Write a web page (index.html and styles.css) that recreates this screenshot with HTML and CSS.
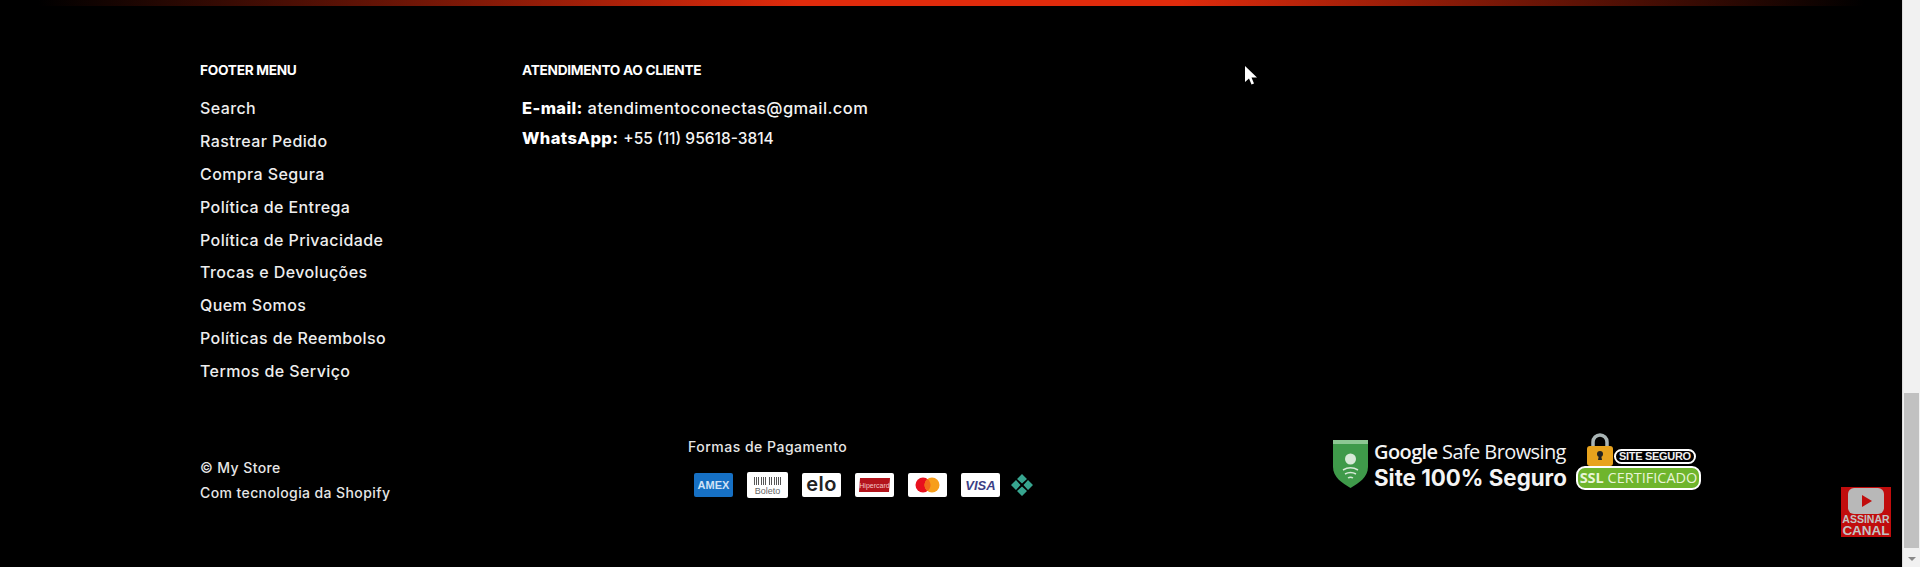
FILE: index.html
```html
<!DOCTYPE html>
<html>
<head>
    <title>My Store</title>
    <link rel="stylesheet" href="styles.css">
</head>
<body>
    <div class="page">
        <footer class="footer">
            <div class="top-line"></div>

            <div class="footer-blocks">
                <div class="menu-block">
                    <h4>FOOTER MENU</h4>
                    <ul class="menu">
                        <li><a href="#">Search</a></li>
                        <li><a href="#">Rastrear Pedido</a></li>
                        <li><a href="#">Compra Segura</a></li>
                        <li><a href="#">Política de Entrega</a></li>
                        <li><a href="#">Política de Privacidade</a></li>
                        <li><a href="#">Trocas e Devoluções</a></li>
                        <li><a href="#">Quem Somos</a></li>
                        <li><a href="#">Políticas de Reembolso</a></li>
                        <li><a href="#">Termos de Serviço</a></li>
                    </ul>
                </div>
                <div class="contact-block">
                    <h4>ATENDIMENTO AO CLIENTE</h4>
                    <p><strong>E-mail:</strong> atendimentoconectas@gmail.com</p>
                    <p><strong>WhatsApp:</strong> <span class="phone">+55 (11) 95618-3814</span></p>
                </div>
            </div>

            <div class="footer-bottom">
                <div class="copyright">
                    <div>© My Store</div>
                    <div>Com tecnologia da Shopify</div>
                </div>

                <div class="payments">
                    <div class="payments-title">Formas de Pagamento</div>
                    <div class="payment-icons">
                        <svg class="pay" width="39" height="24" viewBox="0 0 39 24">
                            <rect width="39" height="24" rx="2" fill="#1670c4"/>
                            <text x="19.5" y="16" text-anchor="middle" class="amex-text">AMEX</text>
                        </svg>
                        <svg class="pay pay-boleto" width="41" height="26" viewBox="0 0 41 26">
                            <rect width="41" height="26" rx="2" fill="#fff"/>
                            <path d="M7.500 5v8M9.500 5v8M11.500 5v8M14.500 5v8M16.500 5v8M18.500 5v8M22.500 5v8M24.500 5v8M27.500 5v8M29.500 5v8M31.500 5v8M33.500 5v8" stroke="#555" stroke-width="1"/>
                            <text x="20.5" y="22" text-anchor="middle" class="boleto-text">Boleto</text>
                        </svg>
                        <svg class="pay" width="39" height="24" viewBox="0 0 39 24">
                            <rect width="39" height="24" rx="2" fill="#fff"/>
                            <text x="19.5" y="18" text-anchor="middle" class="elo-text">elo</text>
                        </svg>
                        <svg class="pay" width="39" height="24" viewBox="0 0 39 24">
                            <rect width="39" height="24" rx="2" fill="#fff"/>
                            <path d="M5 5h30l-1 14H4z" fill="#b3131b"/>
                            <text x="19.5" y="14.5" text-anchor="middle" class="hiper-text">Hipercard</text>
                        </svg>
                        <svg class="pay" width="39" height="24" viewBox="0 0 39 24">
                            <rect width="39" height="24" rx="2" fill="#fff"/>
                            <circle cx="15" cy="12" r="7.5" fill="#e8101e"/>
                            <circle cx="24" cy="12" r="7.5" fill="#f79e1b"/>
                            <path d="M19.5 6a7.5 7.5 0 0 1 0 12a7.5 7.5 0 0 1 0-12z" fill="#f26a1b"/>
                        </svg>
                        <svg class="pay" width="39" height="24" viewBox="0 0 39 24">
                            <rect width="39" height="24" rx="2" fill="#fff"/>
                            <text x="19.5" y="17" text-anchor="middle" class="visa-text">VISA</text>
                        </svg>
                        <svg class="pay pay-pix" width="22" height="22" viewBox="0 0 22 22">
                            <path d="M11 0l5 5-5 4.500L6 5zM11 22l-5-5 5-4.500 5 4.500zM0 11l5-5 4.500 5L5 16zM22 11l-5 5-4.500-5L17 6z" fill="#37a58f"/>
                        </svg>
                    </div>
                </div>

                <div class="trust">
                    <svg class="shield" width="37" height="50" viewBox="0 0 37 50">
                        <path d="M1 1h35v27c0 10-9 16-17.500 21C10 44 1 38 1 28z" fill="#3f9a4a"/>
                        <path d="M1 1h35v4H1z" fill="#8dc893"/>
                        <circle cx="18.500" cy="20" r="5.500" fill="#d7e9d8"/>
                        <path d="M11 31c5-3 10-3 15 0M13 35c3.500-2 7.500-2 11 0M16 39c1.500-1 3.500-1 5 0" stroke="#d7e9d8" stroke-width="1.500" fill="none"/>
                    </svg>
                    <div class="safe-text">
                        <div class="safe-name"><b>Google</b> Safe Browsing</div>
                        <div class="safe-site">Site 100% Seguro</div>
                    </div>
                    <div class="ssl">
                        <div class="ssl-top">
                            <svg width="28" height="33" viewBox="0 0 28 33">
                                <path d="M7 15V9a7 7 0 0 1 14 0v6" stroke="#a9b4b4" stroke-width="3.500" fill="none"/>
                                <rect x="1" y="13" width="26" height="20" rx="3" fill="#e8a31d"/>
                                <circle cx="14" cy="21" r="3" fill="#222"/>
                                <path d="M13 22h2l1 5h-4z" fill="#222"/>
                            </svg>
                            <span class="ssl-site">SITE SEGURO</span>
                        </div>
                        <div class="ssl-label"><b>SSL</b> CERTIFICADO</div>
                    </div>
                </div>
            </div>

            <div class="yt-badge">
                <svg width="36" height="26" viewBox="0 0 36 26">
                    <rect width="36" height="26" rx="6" fill="#b8b8b8"/>
                    <path d="M14 7l10 6-10 6z" fill="#c10d0d"/>
                </svg>
                <div class="yt-label">ASSINAR</div>
                <div class="yt-label yt-big">CANAL</div>
            </div>

            <svg class="cursor" width="14" height="20" viewBox="0 0 14 20">
                <path d="M1 0v16l4-3.500 2.500 6 2.500-1-2.500-6H13z" fill="#fff"/>
            </svg>
        </footer>

        <div class="scrollbar">
            <div class="scroll-track">
                <div class="scroll-thumb"></div>
            </div>
            <div class="scroll-arrow"></div>
        </div>
    </div>
</body>
</html>
```

FILE: styles.css
```css
html, body {
    margin: 0;
    padding: 0;
    height: 567px;
    overflow: hidden;
    background: #000;
}

body {
    font-family: 'Inter', 'Liberation Sans', sans-serif;
    color: #eee;
}

.page {
    display: flex;
    height: 567px;
}

.footer {
    position: relative;
    flex: 1;
    background: #000;
}

.top-line {
    height: 6px;
    background: linear-gradient(to right, #000 2%, #e02b0c 42%, #e02b0c 62%, #000 98%);
}

.footer-blocks {
    display: flex;
    padding: 55px 0 0 200px;
    height: 426px;
    box-sizing: border-box;
}

.menu-block {
    width: 322px;
}

h4 {
    margin: 0 0 13px 0;
    font-size: 13.700px;
    line-height: 18px;
    font-weight: 700;
    letter-spacing: -0.3px;
    color: #fff;
}

.menu {
    list-style: none;
    margin: 0;
    padding: 0;
}

.menu li {
    height: 32.900px;
    line-height: 33px;
    font-size: 16px;
    font-weight: 500;
    letter-spacing: 0.4px;
}

.menu a {
    color: #eee;
    text-decoration: none;
}

.contact-block p {
    margin: 0;
    height: 30px;
    line-height: 33px;
    font-size: 16.500px;
    font-weight: 500;
    letter-spacing: 0.4px;
    color: #f4f4f4;
}

.contact-block strong {
    font-weight: 800;
    color: #fff;
}

.phone {
    font-size: 15.500px;
    letter-spacing: 0;
}

.footer-bottom {
    display: flex;
    align-items: flex-start;
    padding: 0 0 0 200px;
}

.copyright {
    width: 488px;
    padding-top: 23px;
    font-size: 14px;
    font-weight: 500;
    letter-spacing: 0.4px;
    line-height: 25px;
    color: #e6e6e6;
}

.payments {
    width: 644px;
    padding-top: 0;
}

.payments-title {
    font-size: 14px;
    font-weight: 500;
    letter-spacing: 0.5px;
    line-height: 20px;
    margin-top: 5px;
    color: #e6e6e6;
}

.payment-icons {
    display: flex;
    align-items: center;
    gap: 14px;
    padding: 15px 0 0 6px;
}

.pay-pix {
    margin-left: -3px;
}

.amex-text {
    font-family: 'Liberation Sans', sans-serif;
    font-size: 11px;
    font-weight: 700;
    fill: #cfe2f6;
}

.boleto-text {
    font-family: 'Liberation Sans', sans-serif;
    font-size: 9px;
    fill: #666;
}

.elo-text {
    font-family: 'Inter', sans-serif;
    font-size: 20px;
    font-weight: 600;
    letter-spacing: 0.5px;
    fill: #222;
}

.hiper-text {
    font-family: 'Liberation Sans', sans-serif;
    font-size: 7px;
    fill: #f5c9c9;
}

.visa-text {
    font-family: 'Liberation Sans', sans-serif;
    font-size: 13px;
    font-weight: 700;
    font-style: italic;
    fill: #3c3f86;
}

.trust {
    display: flex;
    align-items: flex-start;
    margin-top: 7px;
}

.safe-text {
    margin-left: 5px;
    width: 204px;
    color: #f4f4f4;
}

.safe-name {
    font-family: 'Open Sans', sans-serif;
    font-size: 20px;
    line-height: 26px;
    letter-spacing: -0.6px;
    white-space: nowrap;
}

.safe-name b {
    font-weight: 600;
}

.safe-site {
    font-family: 'Inter', sans-serif;
    font-size: 22.300px;
    font-weight: 700;
    line-height: 26px;
    white-space: nowrap;
}

.ssl {
    margin-left: -2px;
    margin-top: -6px;
}

.ssl-top {
    display: flex;
    align-items: flex-end;
    padding-left: 10px;
    height: 33px;
}

.ssl-site {
    margin: 0 0 2px 0;
    padding: 0 3px;
    background: #000;
    border: 2px solid #fff;
    border-radius: 9px;
    font-family: 'Liberation Sans', sans-serif;
    font-size: 11px;
    font-weight: 700;
    line-height: 11px;
    letter-spacing: -0.3px;
    color: #eee;
    white-space: nowrap;
}

.ssl-label {
    width: 121px;
    height: 20px;
    line-height: 20px;
    text-align: center;
    background: #6fb52c;
    border: 2px solid #fff;
    border-radius: 9px;
    font-family: 'Open Sans', sans-serif;
    font-size: 14.500px;
    color: #e8f4d8;
    white-space: nowrap;
}

.yt-badge {
    position: absolute;
    left: 1841px;
    top: 487px;
    width: 50px;
    height: 50px;
    background: #c10d0d;
    text-align: center;
    box-sizing: border-box;
    padding-top: 1px;
    overflow: hidden;
}

.yt-badge svg {
    display: block;
    margin: 0 auto;
}

.yt-label {
    font-family: 'Liberation Sans', sans-serif;
    font-size: 10.500px;
    font-weight: 700;
    line-height: 11px;
    color: #c4c4c4;
}

.yt-big {
    font-size: 13.500px;
    line-height: 12px;
}

.cursor {
    position: absolute;
    left: 1244px;
    top: 66px;
}

.scrollbar {
    width: 18px;
    background: #f1f1f1;
    border-left: 1px solid #ddd;
    display: flex;
    flex-direction: column;
    box-sizing: border-box;
}

.scroll-track {
    flex: 1;
    padding-top: 393px;
}

.scroll-thumb {
    height: 155px;
    background: #c1c1c1;
    margin: 0 1px;
}

.scroll-arrow {
    width: 0;
    height: 0;
    margin: 0 auto 6px;
    border-left: 4px solid transparent;
    border-right: 4px solid transparent;
    border-top: 4px solid #8a8a8a;
}
```
